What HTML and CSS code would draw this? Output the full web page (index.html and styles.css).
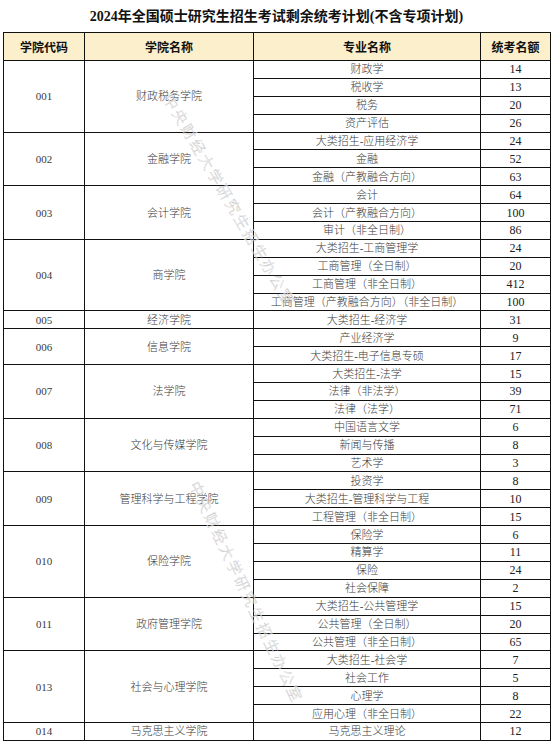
FILE: index.html
```html
<!DOCTYPE html>
<html lang="zh-CN">
<head>
<meta charset="utf-8">
<title>2024年全国硕士研究生招生考试剩余统考计划</title>
<link rel="stylesheet" href="styles.css">
</head>
<body>
<div class="page">
  <h1 class="title">2024年全国硕士研究生招生考试剩余统考计划(不含专项计划)</h1>
  <table class="plan">
    <colgroup>
      <col class="c1"><col class="c2"><col class="c3"><col class="c4">
    </colgroup>
    <thead>
      <tr class="head"><th>学院代码</th><th>学院名称</th><th>专业名称</th><th>统考名额</th></tr>
    </thead>
    <tbody>
      <tr><td rowspan="4">001</td><td rowspan="4">财政税务学院</td><td>财政学</td><td class="num">14</td></tr>
      <tr><td>税收学</td><td class="num">13</td></tr>
      <tr><td>税务</td><td class="num">20</td></tr>
      <tr><td>资产评估</td><td class="num">26</td></tr>

      <tr><td rowspan="3">002</td><td rowspan="3">金融学院</td><td>大类招生-应用经济学</td><td class="num">24</td></tr>
      <tr><td>金融</td><td class="num">52</td></tr>
      <tr><td>金融（产教融合方向）</td><td class="num">63</td></tr>

      <tr><td rowspan="3">003</td><td rowspan="3">会计学院</td><td>会计</td><td class="num">64</td></tr>
      <tr><td>会计（产教融合方向）</td><td class="num">100</td></tr>
      <tr><td>审计（非全日制）</td><td class="num">86</td></tr>

      <tr><td rowspan="4">004</td><td rowspan="4">商学院</td><td>大类招生-工商管理学</td><td class="num">24</td></tr>
      <tr><td>工商管理（全日制）</td><td class="num">20</td></tr>
      <tr><td>工商管理（非全日制）</td><td class="num">412</td></tr>
      <tr><td>工商管理（产教融合方向）（非全日制）</td><td class="num">100</td></tr>

      <tr><td>005</td><td>经济学院</td><td>大类招生-经济学</td><td class="num">31</td></tr>

      <tr><td rowspan="2">006</td><td rowspan="2">信息学院</td><td>产业经济学</td><td class="num">9</td></tr>
      <tr><td>大类招生-电子信息专硕</td><td class="num">17</td></tr>

      <tr><td rowspan="3">007</td><td rowspan="3">法学院</td><td>大类招生-法学</td><td class="num">15</td></tr>
      <tr><td>法律（非法学）</td><td class="num">39</td></tr>
      <tr><td>法律（法学）</td><td class="num">71</td></tr>

      <tr><td rowspan="3">008</td><td rowspan="3">文化与传媒学院</td><td>中国语言文学</td><td class="num">6</td></tr>
      <tr><td>新闻与传播</td><td class="num">8</td></tr>
      <tr><td>艺术学</td><td class="num">3</td></tr>

      <tr><td rowspan="3">009</td><td rowspan="3">管理科学与工程学院</td><td>投资学</td><td class="num">8</td></tr>
      <tr><td>大类招生-管理科学与工程</td><td class="num">10</td></tr>
      <tr><td>工程管理（非全日制）</td><td class="num">15</td></tr>

      <tr><td rowspan="4">010</td><td rowspan="4">保险学院</td><td>保险学</td><td class="num">6</td></tr>
      <tr><td>精算学</td><td class="num">11</td></tr>
      <tr><td>保险</td><td class="num">24</td></tr>
      <tr><td>社会保障</td><td class="num">2</td></tr>

      <tr><td rowspan="3">011</td><td rowspan="3">政府管理学院</td><td>大类招生-公共管理学</td><td class="num">15</td></tr>
      <tr><td>公共管理（全日制）</td><td class="num">20</td></tr>
      <tr><td>公共管理（非全日制）</td><td class="num">65</td></tr>

      <tr><td rowspan="4">013</td><td rowspan="4">社会与心理学院</td><td>大类招生-社会学</td><td class="num">7</td></tr>
      <tr><td>社会工作</td><td class="num">5</td></tr>
      <tr><td>心理学</td><td class="num">8</td></tr>
      <tr><td>应用心理（非全日制）</td><td class="num">22</td></tr>

      <tr><td>014</td><td>马克思主义学院</td><td>马克思主义理论</td><td class="num">12</td></tr>
    </tbody>
  </table>
  <div class="watermark wm1">中央财经大学研究生招生办公室</div>
  <div class="watermark wm2">中央财经大学研究生招生办公室</div>
</div>
</body>
</html>
```

FILE: styles.css
```css
html, body {
  margin: 0;
  padding: 0;
  background: #ffffff;
}

.page {
  position: relative;
  width: 553px;
  height: 747px;
  overflow: hidden;
  padding-left: 3px;
  box-sizing: border-box;
}

.title {
  margin: 0;
  height: 32px;
  width: 547px;
  line-height: 33px;
  text-align: center;
  font-family: "Liberation Serif", "Noto Sans CJK SC", serif;
  font-size: 14px;
  font-weight: 700;
  color: #111;
}

.plan {
  width: 547px;
  border-collapse: collapse;
  table-layout: fixed;
  font-family: "Liberation Serif", "Noto Sans CJK SC", serif;
  font-size: 11px;
  font-weight: 300;
  color: #3a3a3a;
}

.c1 { width: 81px; }
.c2 { width: 169px; }
.c3 { width: 227px; }
.c4 { width: 70px; }

.plan th,
.plan td {
  border: 1px solid #111;
  padding: 0;
  text-align: center;
  vertical-align: middle;
  white-space: nowrap;
}

.plan .head {
  height: 28px;
  background: #fcefcc;
}

.plan th {
  font-family: "Noto Sans CJK SC", sans-serif;
  font-size: 12px;
  font-weight: 700;
  color: #111;
}

.plan tbody tr {
  height: 17.9px;
}

.plan td {
  line-height: 16px;
}

.plan .num {
  font-size: 12px;
  font-weight: 400;
  color: #222;
}

.watermark {
  position: absolute;
  font-family: "Noto Sans CJK SC", sans-serif;
  font-size: 15px;
  font-weight: 300;
  letter-spacing: 2.4px;
  white-space: nowrap;
  color: rgba(255, 255, 255, 0.6);
  -webkit-text-stroke: 0.35px #c4c4c4;
  pointer-events: none;
}

.wm1 {
  left: 230px;
  top: 200px;
  transform: translate(-50%, -50%) rotate(59.5deg);
}

.wm2 {
  left: 247px;
  top: 592px;
  transform: translate(-50%, -50%) rotate(64.5deg);
}
```
